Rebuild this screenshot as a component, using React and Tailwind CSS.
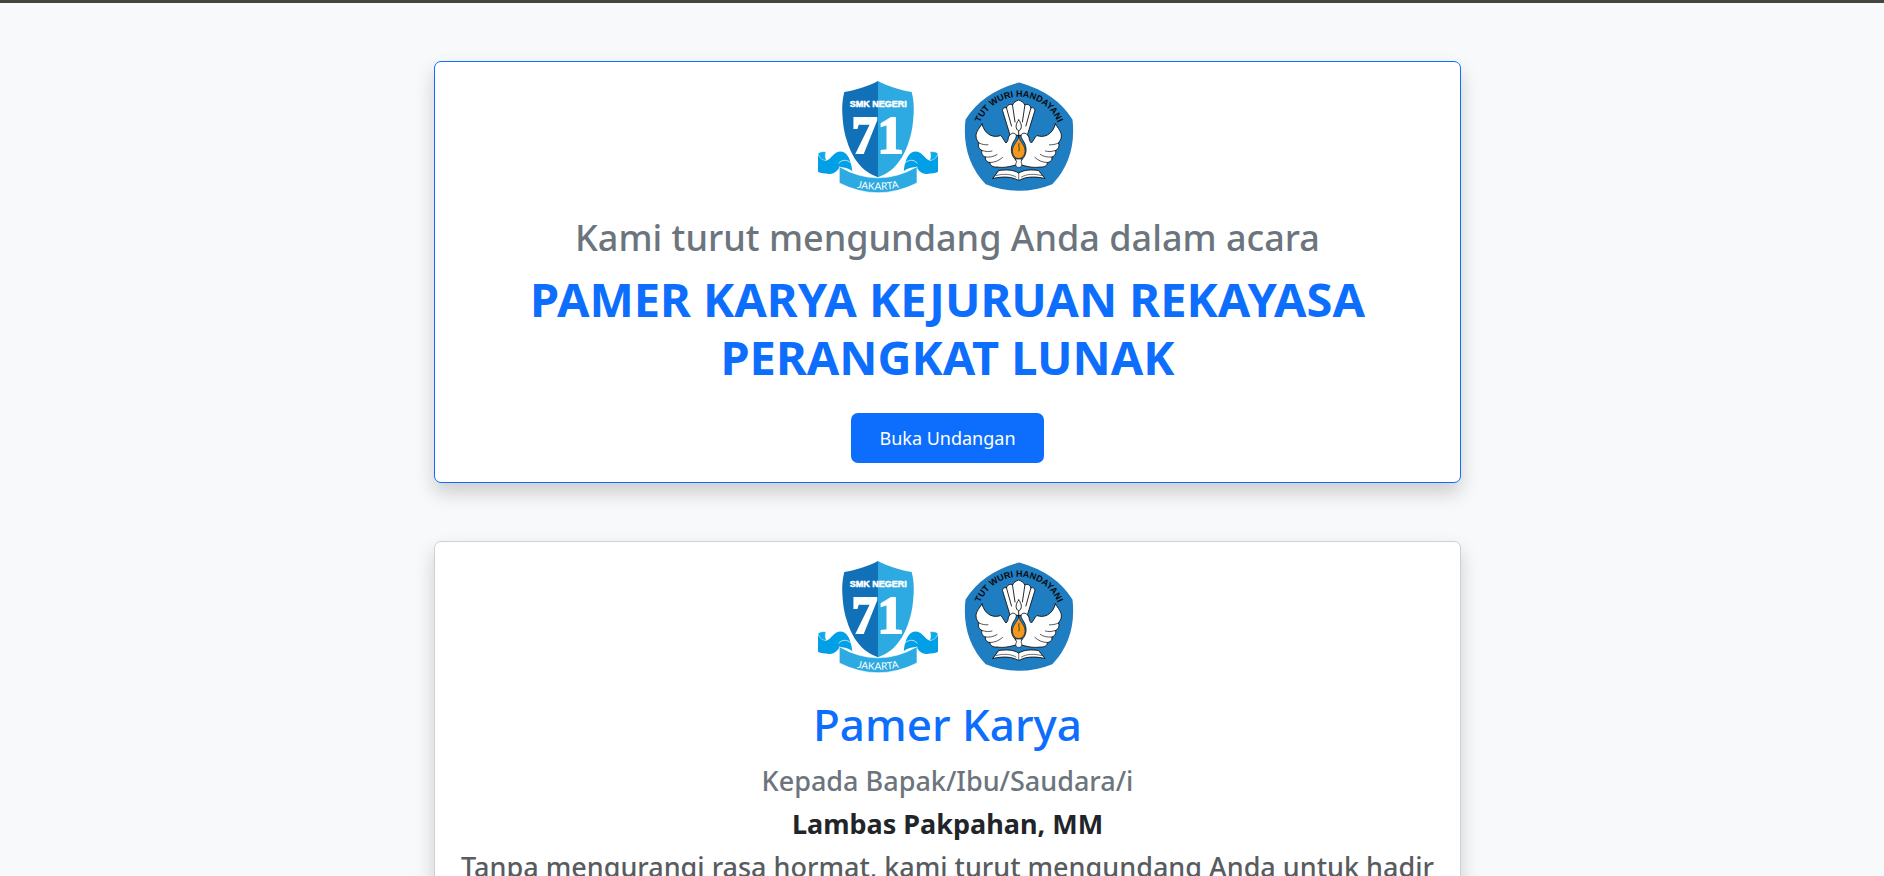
import React, { useId } from 'react';

function SchoolLogo() {
  const arc = useId();
  return (
    <svg viewBox="0 0 120 112" className="h-28 w-[120px]" role="img" aria-label="SMK Negeri 71 Jakarta">
      <defs>
        <path id={arc} d="M22 102 Q60 115.500 98 102" />
      </defs>
      {/* ribbon tails */}
      {[undefined, 'translate(120 0) scale(-1 1)'].map((flip, i) => (
        <g key={i} transform={flip}>
          <path d="M0 73.500 C2 77 5 79.500 8 79.500 C13 79 15 71 22 70.500 C29 70.500 33 78 34.300 90.500 C31 87 27 86.500 22 86 C19.500 89 17 93.300 11 93 C6.500 92.500 2.500 92.300 0 90.800 Z" fill="#009fe6" />
          <path d="M0 72.300 C2 70.800 4.500 70.500 8 70.700 C7 73 7 77 8.500 79.500 C4.500 79.500 1.500 77.500 0 72.300 Z" fill="#12a9ea" stroke="#fff" strokeWidth="0.4" />
          <path d="M20.500 82.300 C24 78.500 29 78 33.500 82.500" fill="none" stroke="#fff" strokeWidth="0.7" />
        </g>
      ))}
      {/* shield */}
      <path d="M60 0 C50 5.500 38 9 26.300 11 C24.500 18 24 25 24.300 32 C25 43 26 51 28.700 59 C31 67 35 76 40.300 82.300 C45 88.500 52 93.500 60 96.300 Z" fill="#1070b8" />
      <path d="M60 0 C70 5.500 82 9 93.700 11 C95.500 18 96 25 95.700 32 C95 43 94 51 91.300 59 C89 67 85 76 79.700 82.300 C75 88.500 68 93.500 60 96.300 Z" fill="#2daae2" />
      {/* banner */}
      <path d="M21.300 85.700 Q60 108 99 85.700 L99 102 Q60 121.500 21.300 102 Z" fill="#2daae2" stroke="#fff" strokeWidth="0.6" />
      <text x="60.300" y="26.300" textAnchor="middle" fill="#fff" stroke="#fff" strokeWidth="0.5" className="font-['Liberation_Sans',sans-serif] text-[9px] font-bold">SMK NEGERI</text>
      <text x="59.500" y="71.500" textAnchor="middle" fill="#fff" stroke="#fff" strokeWidth="2" className="font-['Liberation_Serif',serif] text-[52px] font-bold">71</text>
      <text textAnchor="middle" fill="#fff" className="font-['Lato',sans-serif] text-[10px]">
        <textPath href={'#' + arc} startOffset="50%">JAKARTA</textPath>
      </text>
    </svg>
  );
}

function MinistryLogo() {
  const arc = useId();
  return (
    <svg viewBox="0 0 120 112" className="h-28 w-[120px]" role="img" aria-label="Tut Wuri Handayani">
      <defs>
        <path id={arc} d="M20.700 50.200 A42 42 0 0 1 103.300 50.200" />
      </defs>
      <path d="M62 2.200 C43 7.500 21.500 18.500 9.200 39 C6.500 64 13.500 86 29 102.500 C50 111.200 74 111.200 95 102.500 C110.500 86 117.500 64 114.800 39 C102.500 18.500 81 7.500 62 2.200 Z" fill="#1f7dc2" stroke="#1f7dc2" strokeWidth="1.5" strokeLinejoin="round" />
      <text textAnchor="middle" fill="#0a0a0a" className="font-['Liberation_Sans',sans-serif] text-[9px] font-bold">
        <textPath href={'#' + arc} startOffset="50%">TUT WURI HANDAYANI</textPath>
      </text>
      <g fill="#fff" stroke="#111" strokeWidth="0.9" strokeLinejoin="round" strokeLinecap="round">
        {/* tail feathers */}
        <path d="M53 54 L45.500 29.500 C45.500 27 47.500 26 49.500 27 C50 24 53 22.500 55.500 24 C56.500 21.500 59 20 61.700 19 C64.400 20 66.900 21.500 67.900 24 C70.400 22.500 73.400 24 73.900 27 C75.900 26 77.900 27 77.900 29.500 L70.400 54 Z" />
        <path d="M49.500 27 L54.500 45 M55.500 24 L58 41 M67.900 24 L65.400 41 M73.900 27 L68.900 45" fill="none" />
        {/* wings, mirrored round the flame */}
        {[undefined, 'translate(123.400 0) scale(-1 1)'].map((flip, i) => (
          <g key={i} transform={flip}>
            <path d="M25 43 C22.500 47 19 50.500 19 55 C19 58.500 21 60.500 22 62 C20.500 65 22 68 25 69.500 C24 72.500 25.500 75 28.500 76 C28 79 29.500 81 33 81.500 C33 84.500 36 86.500 40 86 C46 87 53 86 61.700 83 L58 78 C54 74 53 67 56.500 61 C58.500 57.500 60.500 55 58.500 53 C56 51 53 53 51.500 56 C51 58.500 51 60.500 49 62 C47 60 46 56.500 43.500 54.500 C37 57 28 54.500 25 43 Z" />
            <path d="M22 62 C25 63.500 28 64 31 63.800 M25 69.500 C29 70.800 32 70.800 35 70 M28.500 76 C33 76.500 37 75.500 40 73.500 M33 81.500 C38 81.500 42 79.500 45.500 76.500" fill="none" strokeWidth="0.7" />
          </g>
        ))}
        {/* lamp tip, flame and stem */}
        <path d="M61.700 39 C65.500 43.500 65 48 61.700 50 C58.400 48 58 43.500 61.700 39 Z" />
        <path d="M61.700 50 V56" fill="none" />
        <path d="M61.700 56 C63 61 68.500 64.500 68 70.500 C67.500 75 65 77.500 61.700 77.500 C58.400 77.500 56 75 55.500 70.500 C55 64.500 60.500 61 61.700 56 Z" fill="#f39a1e" strokeWidth="0.6" />
        <path d="M62 62.500 C61 65 63 67 62 70" fill="none" strokeWidth="0.7" />
        <path d="M58.500 78 H65 L64 81 C66 84 64 86.500 61.700 86.500 C59.400 86.500 57.500 84 59.500 81 Z" strokeWidth="0.7" />
        {/* open book */}
        <path d="M42 89.500 C49 88.500 56 88.500 61.700 92 C67.500 88.500 74.500 88.500 81.500 89.500 L88 97.500 C79 95.500 71 95.500 65 98 C63 99.500 60.500 99.500 58.500 98 C52.500 95.500 44.500 95.500 36 97.500 Z" />
        <path d="M61.700 92 V98.500 M39 94.500 C47 92.500 54 93 59 96 M84.500 94.500 C76.500 92.500 69.500 93 64.500 96" fill="none" strokeWidth="0.6" />
      </g>
    </svg>
  );
}

function Card({ border, children }) {
  return (
    <section className={`w-full max-w-[1027px] rounded-[7px] border bg-white p-[19px] text-center shadow-[0_10px_19px_rgba(0,0,0,0.175)] ${border}`}>
      <div className="mb-5 flex justify-center gap-[19px]">
        <SchoolLogo />
        <MinistryLogo />
      </div>
      {children}
    </section>
  );
}

export default function App() {
  return (
    <div className="min-h-screen border-t-[3px] border-[#464641] bg-[#f8f9fb] font-['Noto_Sans',sans-serif] text-[#212529]">
      <main className="flex flex-col items-center gap-[58px] py-[58px] pl-[11px]">
        <Card border="border-[#0d6efd]">
          <h2 className="mb-2 text-[36px] leading-[49px] font-medium text-[#6c757d]">Kami turut mengundang Anda dalam acara</h2>
          <h1 className="mb-[27px] text-[47px] leading-[58px] font-bold text-[#0d6efd]">PAMER KARYA KEJURUAN REKAYASA PERANGKAT LUNAK</h1>
          <button type="button" className="rounded-[7px] bg-[#0d6efd] px-7 py-[10px] align-top text-[18px] leading-[30px] text-white">Buka Undangan</button>
        </Card>
        <Card border="border-[#cfd0d1]">
          <h2 className="mb-2 text-[44px] leading-[62px] font-medium text-[#0d6efd]">Pamer Karya</h2>
          <p className="mb-2 text-[27px] leading-[35px] font-medium text-[#6c757d]">Kepada Bapak/Ibu/Saudara/i</p>
          <p className="mb-2 text-[27px] leading-[35px] font-bold">Lambas Pakpahan, MM</p>
          <p className="text-[27px] leading-[35px] font-medium text-[#585c5f]">Tanpa mengurangi rasa hormat, kami turut mengundang Anda untuk hadir</p>
        </Card>
      </main>
    </div>
  );
}
